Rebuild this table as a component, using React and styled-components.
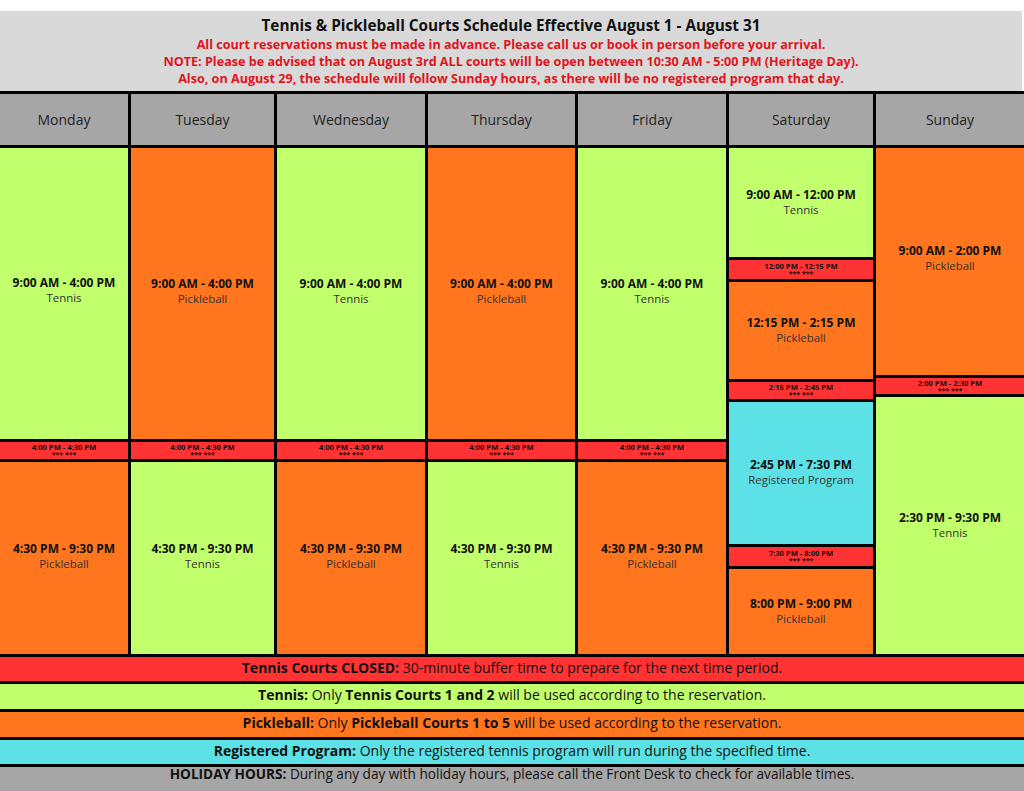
import React from "react";
import styled, { createGlobalStyle } from "styled-components";

const GREEN = "#c1ff6c";
const ORANGE = "#ff761f";
const RED = "#ff3334";
const CYAN = "#5ce1e6";
const GRAY = "#a6a6a6";

const days = [
  { name: "Monday", width: 128, slots: [
    { kind: "tennis", h: 291, time: "9:00 AM - 4:00 PM", up: 7 },
    { kind: "closed", h: 17, time: "4:00 PM - 4:30 PM" },
    { kind: "pickle", h: 192, time: "4:30 PM - 9:30 PM", up: 5 },
  ] },
  { name: "Tuesday", width: 143, slots: [
    { kind: "pickle", h: 291, time: "9:00 AM - 4:00 PM", up: 6 },
    { kind: "closed", h: 17, time: "4:00 PM - 4:30 PM" },
    { kind: "tennis", h: 192, time: "4:30 PM - 9:30 PM", up: 5 },
  ] },
  { name: "Wednesday", width: 148, slots: [
    { kind: "tennis", h: 291, time: "9:00 AM - 4:00 PM", up: 6 },
    { kind: "closed", h: 17, time: "4:00 PM - 4:30 PM" },
    { kind: "pickle", h: 192, time: "4:30 PM - 9:30 PM", up: 4 },
  ] },
  { name: "Thursday", width: 147, slots: [
    { kind: "pickle", h: 291, time: "9:00 AM - 4:00 PM", up: 6 },
    { kind: "closed", h: 17, time: "4:00 PM - 4:30 PM" },
    { kind: "tennis", h: 192, time: "4:30 PM - 9:30 PM", up: 4 },
  ] },
  { name: "Friday", width: 148, slots: [
    { kind: "tennis", h: 291, time: "9:00 AM - 4:00 PM", up: 6 },
    { kind: "closed", h: 17, time: "4:00 PM - 4:30 PM" },
    { kind: "pickle", h: 192, time: "4:30 PM - 9:30 PM", up: 4 },
  ] },
  { name: "Saturday", width: 144, slots: [
    { kind: "tennis", h: 109, time: "9:00 AM - 12:00 PM" },
    { kind: "closed", h: 19, time: "12:00 PM - 12:15 PM" },
    { kind: "pickle", h: 97, time: "12:15 PM - 2:15 PM" },
    { kind: "closed", h: 17, time: "2:15 PM - 2:45 PM" },
    { kind: "program", h: 142, time: "2:45 PM - 7:30 PM" },
    { kind: "closed", h: 19, time: "7:30 PM - 8:00 PM" },
    { kind: "pickle", h: 85, time: "8:00 PM - 9:00 PM" },
  ] },
  { name: "Sunday", width: 148, slots: [
    { kind: "pickle", h: 227, time: "9:00 AM - 2:00 PM", up: 8 },
    { kind: "closed", h: 16, time: "2:00 PM - 2:30 PM" },
    { kind: "tennis", h: 257, time: "2:30 PM - 9:30 PM" },
  ] },
];

const kinds = {
  tennis: { bg: GREEN, label: "Tennis" },
  pickle: { bg: ORANGE, label: "Pickleball" },
  program: { bg: CYAN, label: "Registered Program" },
  closed: { bg: RED, label: "*** ***" },
};

const GlobalStyle = createGlobalStyle`
  body {
    margin: 0;
    background: #fff;
    font-family: "Open Sans", "Noto Sans", sans-serif;
    color: #111;
  }
`;

const Page = styled.div`
  width: 1024px;
  height: 791px;
  overflow: hidden;
  padding-top: 11px;
  box-sizing: border-box;
`;

const Banner = styled.header`
  width: 1022px;
  height: 80px;
  background: #d9d9d9;
  display: flex;
  flex-direction: column;
  align-items: center;
  padding-top: 4px;
  box-sizing: border-box;
`;

const Title = styled.h1`
  margin: 0;
  font-size: 15.3px;
  font-weight: 700;
  line-height: 21px;
  color: #111;
`;

const Notice = styled.p`
  margin: 0;
  font-size: 12.6px;
  font-weight: 700;
  line-height: 17px;
  color: #e0141b;
`;

const Grid = styled.div`
  display: grid;
  grid-template-columns: ${(p) => p.$cols};
  grid-template-rows: 51px 506px;
  gap: 3px;
  background: #000;
  padding: 3px 0;
`;

const DayHead = styled.div`
  background: ${GRAY};
  display: flex;
  align-items: center;
  justify-content: center;
  font-size: 14px;
  color: #222;
`;

const DayColumn = styled.div`
  display: flex;
  flex-direction: column;
  gap: 3px;
`;

const Slot = styled.div`
  height: ${(p) => p.$h}px;
  background: ${(p) => p.$bg};
  display: flex;
  flex-direction: column;
  align-items: center;
  justify-content: center;
  text-align: center;
  padding-bottom: ${(p) => p.$up ?? 2}px;
  box-sizing: border-box;
  overflow: hidden;
`;

const Time = styled.div`
  font-size: 12px;
  font-weight: 700;
  line-height: 16px;
  color: #111;
`;

const Label = styled.div`
  font-size: 11.4px;
  line-height: 14px;
  color: #333;
`;

const BufferTime = styled.div`
  font-size: 7.6px;
  font-weight: 700;
  line-height: 8px;
  color: #111;
`;

const Stars = styled.div`
  font-size: 7px;
  font-weight: 700;
  line-height: 7px;
  color: #111;
`;

const Legend = styled.div`
  display: flex;
  flex-direction: column;
  gap: 3px;
  background: #000;
`;

const LegendBar = styled.div`
  height: ${(p) => p.$h}px;
  background: ${(p) => p.$bg};
  display: flex;
  justify-content: center;
  align-items: ${(p) => (p.$top ? "flex-start" : "center")};
  padding-bottom: ${(p) => (p.$top ? 0 : 3)}px;
  box-sizing: border-box;
  font-size: ${(p) => (p.$top ? 13.6 : 14)}px;
  line-height: 14px;
  color: #111;

  b {
    font-weight: 700;
  }
`;

function DaySlot({ slot }) {
  const k = kinds[slot.kind];
  if (slot.kind === "closed") {
    return (
      <Slot $h={slot.h} $bg={k.bg} $up={0}>
        <BufferTime>{slot.time}</BufferTime>
        <Stars>{k.label}</Stars>
      </Slot>
    );
  }
  return (
    <Slot $h={slot.h} $bg={k.bg} $up={slot.up}>
      <Time>{slot.time}</Time>
      <Label>{k.label}</Label>
    </Slot>
  );
}

export default function App() {
  const cols = days.map((d) => `${d.width}px`).join(" ");
  return (
    <Page>
      <GlobalStyle />
      <Banner>
        <Title>Tennis &amp; Pickleball Courts Schedule Effective August 1 - August 31</Title>
        <Notice>All court reservations must be made in advance. Please call us or book in person before your arrival.</Notice>
        <Notice>NOTE: Please be advised that on August 3rd ALL courts will be open between 10:30 AM - 5:00 PM (Heritage Day).</Notice>
        <Notice>Also, on August 29, the schedule will follow Sunday hours, as there will be no registered program that day.</Notice>
      </Banner>
      <Grid $cols={cols}>
        {days.map((d) => (
          <DayHead key={d.name}>{d.name}</DayHead>
        ))}
        {days.map((d) => (
          <DayColumn key={d.name}>
            {d.slots.map((s, i) => (
              <DaySlot key={i} slot={s} />
            ))}
          </DayColumn>
        ))}
      </Grid>
      <Legend>
        <LegendBar $h={24} $bg={RED}>
          <span><b>Tennis Courts CLOSED:</b> 30-minute buffer time to prepare for the next time period.</span>
        </LegendBar>
        <LegendBar $h={25} $bg={GREEN}>
          <span><b>Tennis:</b> Only <b>Tennis Courts 1 and 2</b> will be used according to the reservation.</span>
        </LegendBar>
        <LegendBar $h={25} $bg={ORANGE}>
          <span><b>Pickleball:</b> Only <b>Pickleball Courts 1 to 5</b> will be used according to the reservation.</span>
        </LegendBar>
        <LegendBar $h={24} $bg={CYAN}>
          <span><b>Registered Program:</b> Only the registered tennis program will run during the specified time.</span>
        </LegendBar>
        <LegendBar $h={24} $bg={GRAY} $top>
          <span><b>HOLIDAY HOURS:</b> During any day with holiday hours, please call the Front Desk to check for available times.</span>
        </LegendBar>
      </Legend>
    </Page>
  );
}
